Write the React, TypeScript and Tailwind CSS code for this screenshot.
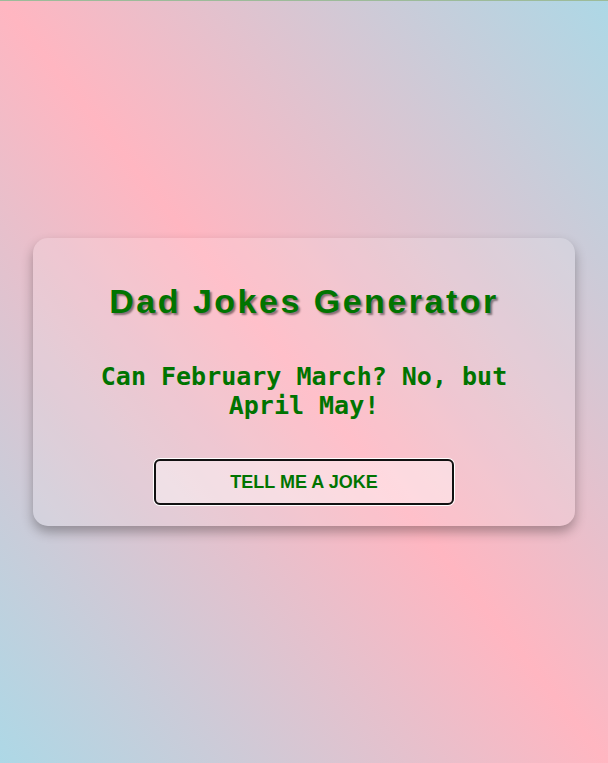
import { useState } from 'react';

const jokes = [
  'Can February March? No, but April May!',
  "I'm reading a book about anti-gravity. It's impossible to put down!",
  'Why did the scarecrow win an award? He was outstanding in his field.',
];

export default function App() {
  const [index, setIndex] = useState(0);

  return (
    <div className="min-h-screen flex flex-col bg-[linear-gradient(to_top_right,#add8e6,#ffb6c1,#add8e6)]">
      <div className="h-px bg-[#9dbb9a]" />
      <main className="flex-1 flex items-center justify-center">
        <div className="w-[542px] rounded-[15px] bg-white/15 shadow-[0_6px_12px_rgba(0,0,0,0.3)] px-5 pt-[43px] pb-[21px] flex flex-col items-center text-center">
          <h1 className="font-['Liberation_Sans',Arial,sans-serif] font-bold text-[34px] leading-[40px] tracking-[2.5px] text-[#007400] [text-shadow:2px_2px_2px_rgba(0,0,0,0.45)]">
            Dad Jokes Generator
          </h1>
          <p className="mt-[41px] px-5 font-['DejaVu_Sans_Mono',monospace] font-bold text-[25px] leading-[29px] text-[#007400]">
            {jokes[index]}
          </p>
          <button
            onClick={() => setIndex((index + 1) % jokes.length)}
            className="mt-[39px] w-[300px] h-[46px] rounded-[6px] border-2 border-[#111] bg-white/40 ring-1 ring-white font-['Liberation_Sans',Arial,sans-serif] font-bold text-[18px] text-[#007400]"
          >
            TELL ME A JOKE
          </button>
        </div>
      </main>
    </div>
  );
}
